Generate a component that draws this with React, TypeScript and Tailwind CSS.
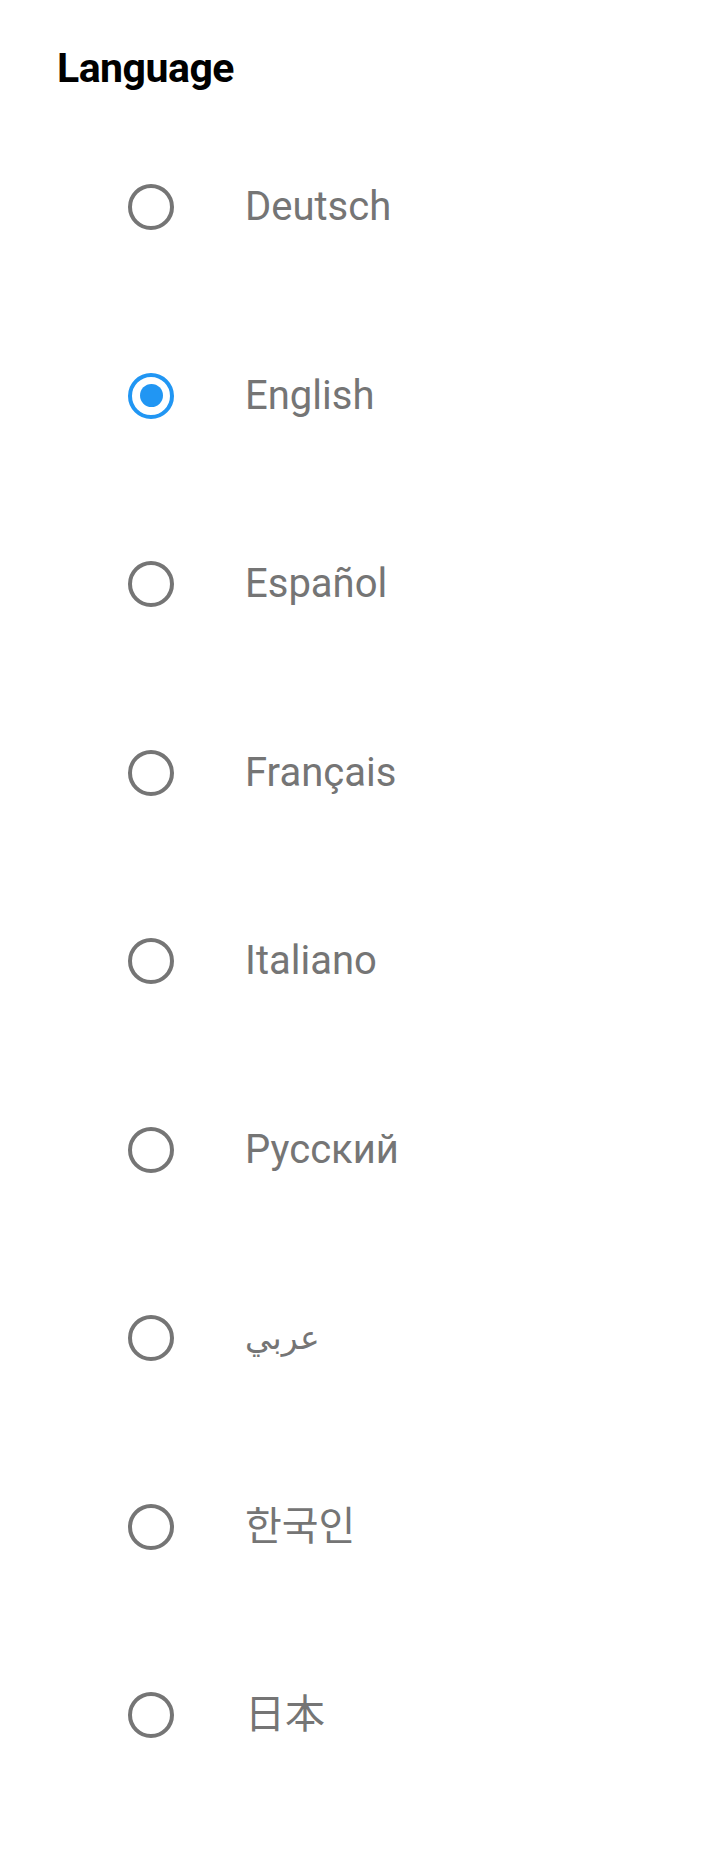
import React from "react";

const langs: { label: string; font?: string }[] = [
  { label: "Deutsch" },
  { label: "English" },
  { label: "Español" },
  { label: "Français" },
  { label: "Italiano" },
  { label: "Русский" },
  { label: "عربي", font: "arabic" },
  { label: "한국인", font: "kr" },
  { label: "日本", font: "jp" },
];

export default function App() {
  const selected = 1;
  return (
    <div className="w-[724px] h-[1850px] bg-white font-['Roboto',sans-serif] overflow-hidden">
      <div className="pt-[44px] pl-[57px]">
        <h1 className="text-[41px] leading-[48px] font-bold text-black tracking-[-0.5px]">Language</h1>
      </div>
      <div className="mt-[21px] flex flex-col">
        {langs.map((l, i) => (
          <div key={l.label} className="h-[188.5px] flex items-center pl-[128px]">
            {i === selected ? (
              <div className="w-[46px] h-[46px] rounded-full border-[4px] border-[#2196f3] flex items-center justify-center shrink-0">
                <div className="w-[23px] h-[23px] rounded-full bg-[#2196f3]" />
              </div>
            ) : (
              <div className="w-[46px] h-[46px] rounded-full border-[4px] border-[#757575] shrink-0" />
            )}
            <span
              className={
                "ml-[71px] leading-[48px] text-[#757575] " +
                (l.font === "kr"
                  ? "text-[40px] font-['Roboto','Noto_Sans_CJK_KR',sans-serif]"
                  : l.font === "jp"
                  ? "text-[40px] font-['Roboto','Noto_Sans_CJK_JP',sans-serif]"
                  : l.font === "arabic"
                  ? "text-[33px] font-['DejaVu_Sans',sans-serif]"
                  : "text-[40px]")
              }
            >
              {l.label}
            </span>
          </div>
        ))}
      </div>
    </div>
  );
}
